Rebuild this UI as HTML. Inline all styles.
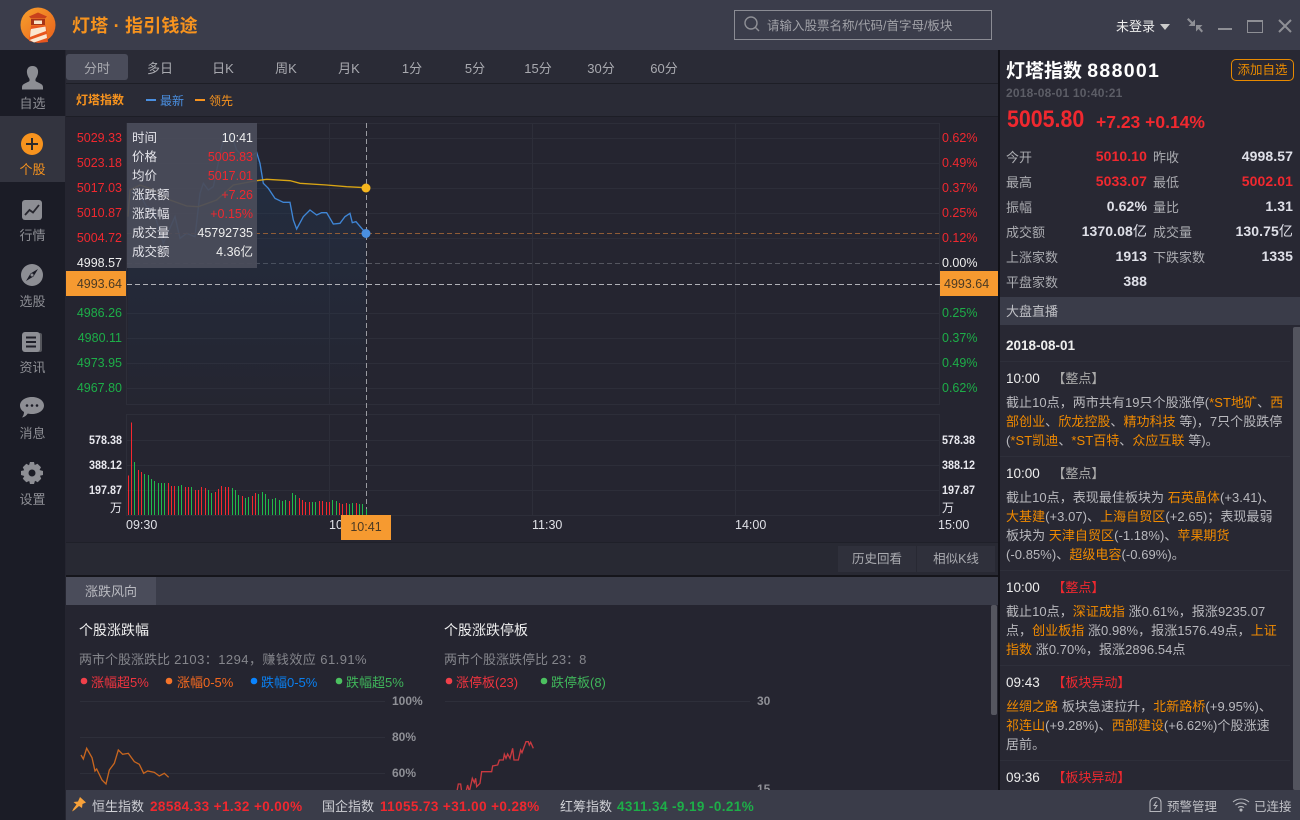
<!DOCTYPE html>
<html lang="zh"><head><meta charset="utf-8"><title>灯塔</title>
<style>
html,body{margin:0;padding:0;background:#252530}
body{width:1300px;height:820px;overflow:hidden;position:relative;font:13px/20px "Liberation Sans","Noto Sans CJK SC",sans-serif;color:#bbb}
.b{position:absolute}
.t{position:absolute;white-space:nowrap;line-height:20px;height:20px;margin-top:1px}
.r{color:#f0282f}.g{color:#1dae48}.w{color:#eee}.o{color:#f7931e}.f{color:#f08a00}
.bd{font-weight:bold}
.tab{position:absolute;top:59px;width:62px;text-align:center;color:#a9aab0;line-height:20px}
.l{position:absolute;width:56px;text-align:right;left:66px;font-size:12.5px;line-height:20px}
.p{position:absolute;left:942px;font-size:12.5px;line-height:20px}
.v{position:absolute;width:56px;text-align:right;left:66px;font-size:12px;font-weight:bold;color:#e8e8ee;line-height:20px;transform:scaleX(.9);transform-origin:100% 50%}
.vr{position:absolute;left:942px;font-size:12px;font-weight:bold;color:#e8e8ee;line-height:20px;transform:scaleX(.9);transform-origin:0 50%}
.s{position:absolute;width:65px;left:0;text-align:center;color:#8d8e94;line-height:20px;margin-top:1px}
.tl{position:absolute;left:132px;color:#e4e4ea;font-size:12.5px;line-height:19px;margin-top:1px}
.tv{position:absolute;left:180px;width:73px;text-align:right;font-size:12.5px;line-height:19px;margin-top:1px}
.sl{position:absolute;color:#aaabb0;line-height:20px;margin-top:1px}
.sv{position:absolute;width:80px;text-align:right;font-size:14px;font-weight:bold;color:#dfe0e8;line-height:20px;letter-spacing:.1px}
.n{position:absolute;left:1006px;white-space:nowrap;color:#b9b9be;line-height:20px;font-size:13px;margin-top:1px;letter-spacing:.05px}
.n b{font-weight:normal;color:#f08a00}
.h{position:absolute;left:1006px;color:#eee;line-height:20px;font-size:13.5px;white-space:nowrap;margin-top:1px}
.h i{font-style:normal;color:#aaa;margin-left:9px;font-size:13px}
.h i.x{color:#f0282f}
.dv{position:absolute;left:1000px;width:290px;height:1px;background:#2e2f3a}
.tm{position:absolute;color:#dfe0e6;font-size:12.5px;line-height:20px}
.sn{letter-spacing:.4px}
</style></head><body>

<!-- Title bar -->
<div class="b" style="left:0;top:0;width:1300px;height:50px;background:#3b3d4b"></div>
<svg class="b" style="left:20px;top:7px" width="37" height="37" viewBox="0 0 37 37">
<defs><linearGradient id="lg" x1="0" y1="0" x2="1" y2="1"><stop offset="0" stop-color="#f8a12c"/><stop offset="1" stop-color="#e8601c"/></linearGradient></defs>
<circle cx="18" cy="18" r="17.5" fill="url(#lg)"/>
<path d="M9 9.500L18 5.500L27 9.500L25 11.500H11Z" fill="#c8401c"/>
<path d="M11 12H25V18H11Z" fill="#a83418"/>
<path d="M14 13.500H22V17H14Z" fill="#f7e3c8"/>
<path d="M11 18.500H26L28 35L18 36L9 34Z" fill="#e8561e"/>
<path d="M11 22L25.500 19.500L26 24L10 30L10.500 24ZM9.500 33L26.500 27L27 31L14 35.500Z" fill="#fbe6cf"/>
</svg>
<div class="t o bd" style="left:72px;top:15px;font-size:18px;letter-spacing:.2px">灯塔 · 指引钱途</div>
<div class="b" style="left:734px;top:10px;width:256px;height:28px;border:1px solid #8b8c94"></div>
<svg class="b" style="left:743px;top:15px" width="18" height="18" viewBox="0 0 18 18" fill="none" stroke="#8f9096" stroke-width="1.400"><circle cx="8" cy="8" r="6"/><path d="M12.500 12.500L16 16"/></svg>
<div class="t" style="left:767px;top:15px;color:#a0a1a7;font-size:12.5px">请输入股票名称/代码/首字母/板块</div>
<div class="t" style="left:1116px;top:16px;color:#eee;font-size:13px">未登录</div>
<svg class="b" style="left:1160px;top:24px" width="10" height="6"><path d="M0 0H10L5 6Z" fill="#ccc"/></svg>
<svg class="b" style="left:1187px;top:18px" width="16" height="15" viewBox="0 0 16 15" fill="#8e8f95"><path d="M0 1.500L1.500 0L5.500 4L8 1.500V8H1.500L4 5.500Z"/><path d="M9 7H15.500L13 9.500L16 13L14.500 14.500L11.500 11L9 13.500Z"/></svg>
<div class="b" style="left:1218px;top:28px;width:14px;height:2px;background:#8e8f95"></div>
<div class="b" style="left:1247px;top:20px;width:14px;height:10px;border:1px solid #8e8f95;border-top-width:2px"></div>
<svg class="b" style="left:1278px;top:19px" width="14" height="14" viewBox="0 0 14 14"><path d="M1 1L13 13M13 1L1 13" stroke="#8e8f95" stroke-width="2"/></svg>

<!-- Sidebar -->
<div class="b" style="left:0;top:50px;width:65px;height:770px;background:#1b1c26"></div>
<div class="b" style="left:0;top:116px;width:65px;height:66px;background:#33343f"></div>
<svg class="b" style="left:21px;top:65px" width="23" height="25" viewBox="0 0 23 25"><path d="M11.500 1C16 1 17.500 4.500 17 8C16.700 10.500 15.500 12.500 14.500 14V16C17 18 22 18.500 22 22V24.500H1V22C1 18.500 6 18 8.500 16V14C7.500 12.500 6.300 10.500 6 8C5.500 4.500 7 1 11.500 1Z" fill="#8d8e94"/></svg>
<div class="s" style="top:93px">自选</div>
<svg class="b" style="left:21px;top:133px" width="22" height="22" viewBox="0 0 22 22"><circle cx="11" cy="11" r="11" fill="#f7931e"/><path d="M11 5V17M5 11H17" stroke="#2b2a2c" stroke-width="2"/></svg>
<div class="s o" style="top:159px;color:#f7931e">个股</div>
<svg class="b" style="left:22px;top:200px" width="20" height="20" viewBox="0 0 20 20"><rect width="20" height="20" rx="3" fill="#8d8e94"/><path d="M3 15L7.500 10L11 12.500L17 5" stroke="#26262e" stroke-width="1.800" fill="none"/></svg>
<div class="s" style="top:225px">行情</div>
<svg class="b" style="left:21px;top:264px" width="22" height="22" viewBox="0 0 22 22"><circle cx="11" cy="11" r="11" fill="#8d8e94"/><path d="M17 5L12.500 12.500L5 17L9.500 9.500Z" fill="#1b1c26"/><circle cx="11" cy="11" r="1.500" fill="#8d8e94"/></svg>
<div class="s" style="top:291px">选股</div>
<svg class="b" style="left:22px;top:332px" width="20" height="21" viewBox="0 0 20 21"><rect x="2" y="1" width="18" height="19" rx="2" fill="#55565c"/><rect width="18" height="20" rx="3" fill="#8d8e94"/><path d="M4 5.500H14M4 10H14M4 14.500H14" stroke="#1f1f28" stroke-width="2"/></svg>
<div class="s" style="top:357px">资讯</div>
<svg class="b" style="left:20px;top:397px" width="24" height="22" viewBox="0 0 24 22"><path d="M12 0C18.600 0 24 3.600 24 8.500S18.600 17 12 17C10.500 17 9 16.800 7.800 16.500C6.500 18.500 4.500 20 2 20.500C3.300 19 4 17 4 15C1.500 13.500 0 11.200 0 8.500C0 3.600 5.400 0 12 0Z" fill="#8d8e94"/><circle cx="7" cy="8.500" r="1.300" fill="#1b1c26"/><circle cx="12" cy="8.500" r="1.300" fill="#1b1c26"/><circle cx="17" cy="8.500" r="1.300" fill="#1b1c26"/></svg>
<div class="s" style="top:423px">消息</div>
<svg class="b" style="left:21px;top:462px" width="22" height="22" viewBox="0 0 22 22"><path d="M9 0H13L13.700 3L16.500 1.800L20 5.300L18.500 8L22 9V13L19 13.800L20.200 16.700L16.700 20.200L14 18.700L13 22H9L8.200 19L5.300 20.200L1.800 16.700L3.300 14L0 13V9L3.200 8.200L1.800 5.300L5.300 1.800L8 3.300Z" fill="#8d8e94"/><circle cx="11" cy="11" r="3.500" fill="#1b1c26"/></svg>
<div class="s" style="top:489px">设置</div>

<!-- Main header rows -->
<div class="b" style="left:66px;top:50px;width:932px;height:66px;background:#2a2b36"></div>
<div class="b" style="left:66px;top:83px;width:932px;height:1px;background:#1d1e26"></div>
<div class="b" style="left:66px;top:116px;width:932px;height:1px;background:#1d1e26"></div>
<div class="b" style="left:66px;top:54px;width:62px;height:26px;background:#4a4c5a;border-radius:3px"></div>
<div class="tab" style="left:66px">分时</div><div class="tab" style="left:129px">多日</div><div class="tab" style="left:192px">日K</div><div class="tab" style="left:255px">周K</div><div class="tab" style="left:318px">月K</div><div class="tab" style="left:381px">1分</div><div class="tab" style="left:444px">5分</div><div class="tab" style="left:507px">15分</div><div class="tab" style="left:570px">30分</div><div class="tab" style="left:633px">60分</div>
<div class="t o bd" style="left:76px;top:89px;font-size:12px">灯塔指数</div>
<div class="b" style="left:146px;top:99px;width:10px;height:2px;background:#4a8fe0"></div>
<div class="t" style="left:160px;top:90px;color:#4a8fe0;font-size:12px">最新</div>
<div class="b" style="left:195px;top:99px;width:10px;height:2px;background:#f7931e"></div>
<div class="t o" style="left:209px;top:90px;font-size:12px">领先</div>

<!-- Main chart -->
<svg class="b" style="left:0;top:0" width="1000" height="580" viewBox="0 0 1000 580" fill="none">
<defs><linearGradient id="fa" x1="0" y1="0" x2="0" y2="1"><stop offset="0" stop-color="#1f3b5c" stop-opacity=".4"/><stop offset="1" stop-color="#1f3b5c" stop-opacity=".02"/></linearGradient></defs>
<g stroke="#2d2e39" stroke-width="1">
<path d="M126.500 123.500H939.500V404.500H126.500Z"/>
<path d="M127 138.500H939M127 163.500H939M127 188.500H939M127 213.500H939M127 238.500H939M127 313.500H939M127 338.500H939M127 363.500H939M127 388.500H939"/>
<path d="M329.500 124V404M532.500 124V404M735.500 124V404"/>
<path d="M126.500 414.500H939.500V515.500H126.500Z"/>
<path d="M127 440.500H939M127 465.500H939M127 490.500H939M329.500 415V515M532.500 415V515M735.500 415V515"/>
</g>
<path d="M127 263.500H939" stroke="#55565f" stroke-dasharray="5 3"/>
<g transform="translate(120 120) scale(.3333)">
<path d="M24 280L30 210L60 225L80 260L100 270L130 370L165 290L180 355L200 340L225 350L240 220L250 190L265 210L280 200L305 80L315 45L335 45L350 90L370 110L390 110L410 97L420 130L430 190L445 205L465 235L490 247L510 247L520 300L530 327L550 290L570 270L590 285L605 278L620 278L640 312L660 310L675 290L690 280L697 308L708 305L738 340V855H24Z" fill="url(#fa)"/>
<path d="M24 280L30 210L60 225L80 260L100 270L130 370L165 290L180 355L200 340L225 350L240 220L250 190L265 210L280 200L305 80L315 45L335 45L350 90L370 110L390 110L410 97L420 130L430 190L445 205L465 235L490 247L510 247L520 300L530 327L550 290L570 270L590 285L605 278L620 278L640 312L660 310L675 290L690 280L697 308L708 305L738 340" stroke="#3f86d6" stroke-width="4"/>
<path d="M24 290L30 210L60 195L100 210L150 240L200 258L235 260L290 240L340 195L410 182L440 178L510 182L540 190L620 195L680 200L738 203" stroke="#d9a514" stroke-width="4"/>
</g>
<path d="M127 233.500H939" stroke="#8f5c36" stroke-dasharray="5 3"/>
<path d="M127 284.500H940" stroke="#b0b1b7" stroke-dasharray="5 3"/>
<path d="M366.500 123V515" stroke="#9a9ba1" stroke-dasharray="5 3"/>
<circle cx="366" cy="188" r="4.500" fill="#f7b71e"/>
<circle cx="366" cy="233.500" r="4.500" fill="#4a8fe0"/>
<g transform="translate(70 410) scale(.3333)" stroke-width="3.200" shape-rendering="crispEdges">
<path stroke="#f5282f" d="M175 315V197M184 315V38M205 315V180M214 315V186M295 315V219M304 315V228M313 315V228M346 315V231M355 315V231M376 315V240M385 315V240M394 315V231M406 315V234M436 315V246M445 315V237M454 315V228M466 315V231M475 315V231M517 315V258M547 315V258M556 315V249M658 315V273M688 315V264M697 315V270M706 315V276M718 315V276M748 315V273M757 315V273M769 315V276M778 315V276M808 315V279M817 315V282M829 315V279M859 315V279"/>
<path stroke="#1fbb4c" d="M193 315V156M223 315V192M235 315V195M244 315V207M253 315V213M265 315V219M274 315V219M283 315V219M325 315V228M334 315V225M364 315V231M415 315V240M424 315V249M487 315V234M496 315V240M505 315V255M526 315V264M535 315V261M565 315V252M577 315V246M586 315V252M595 315V267M607 315V267M616 315V264M628 315V270M637 315V273M646 315V270M667 315V249M676 315V255M727 315V276M736 315V276M787 315V270M799 315V273M838 315V282M847 315V279M868 315V282M877 315V282M889 315V297"/>
</g>
</svg>

<!-- Tooltip -->
<div class="b" style="left:127px;top:123px;width:130px;height:145px;background:rgba(74,76,90,.93)"></div>
<div class="tl" style="top:128px">时间</div><div class="tv w" style="top:128px">10:41</div>
<div class="tl" style="top:147px">价格</div><div class="tv r" style="top:147px">5005.83</div>
<div class="tl" style="top:166px">均价</div><div class="tv r" style="top:166px">5017.01</div>
<div class="tl" style="top:185px">涨跌额</div><div class="tv r" style="top:185px">+7.26</div>
<div class="tl" style="top:204px">涨跌幅</div><div class="tv r" style="top:204px">+0.15%</div>
<div class="tl" style="top:223px">成交量</div><div class="tv w" style="top:223px">45792735</div>
<div class="tl" style="top:242px">成交额</div><div class="tv w" style="top:242px">4.36亿</div>

<!-- Axis labels -->
<div class="l r" style="top:128px">5029.33</div><div class="l r" style="top:153px">5023.18</div><div class="l r" style="top:178px">5017.03</div><div class="l r" style="top:203px">5010.87</div><div class="l r" style="top:228px">5004.72</div><div class="l w" style="top:253px">4998.57</div>
<div class="l g" style="top:303px">4986.26</div><div class="l g" style="top:328px">4980.11</div><div class="l g" style="top:353px">4973.95</div><div class="l g" style="top:378px">4967.80</div>
<div class="p r" style="top:128px">0.62%</div><div class="p r" style="top:153px">0.49%</div><div class="p r" style="top:178px">0.37%</div><div class="p r" style="top:203px">0.25%</div><div class="p r" style="top:228px">0.12%</div><div class="p w" style="top:253px">0.00%</div>
<div class="p g" style="top:303px">0.25%</div><div class="p g" style="top:328px">0.37%</div><div class="p g" style="top:353px">0.49%</div><div class="p g" style="top:378px">0.62%</div>
<div class="b" style="left:66px;top:271px;width:60px;height:25px;background:#f69a30"></div>
<div class="l" style="top:274px;color:#4b3a24">4993.64</div>
<div class="b" style="left:940px;top:271px;width:58px;height:25px;background:#f69a30"></div>
<div class="p" style="top:274px;left:944px;color:#4b3a24">4993.64</div>
<div class="v" style="top:430px">578.38</div><div class="v" style="top:455px">388.12</div><div class="v" style="top:480px">197.87</div><div class="v" style="top:498px;font-weight:normal;transform:none">万</div>
<div class="vr" style="top:430px">578.38</div><div class="vr" style="top:455px">388.12</div><div class="vr" style="top:480px">197.87</div><div class="vr" style="top:498px;font-weight:normal;transform:none">万</div>
<div class="tm" style="left:126px;top:515px">09:30</div><div class="tm" style="left:329px;top:515px">10:30</div><div class="tm" style="left:532px;top:515px">11:30</div><div class="tm" style="left:735px;top:515px">14:00</div><div class="tm" style="left:938px;top:515px">15:00</div>
<div class="b" style="left:341px;top:515px;width:50px;height:25px;background:#f69a30;text-align:center;line-height:25px;color:#4b3a24;font-size:12.5px">10:41</div>

<!-- Buttons row -->
<div class="b" style="left:66px;top:542px;width:932px;height:33px;background:#282933;border-top:1px solid #1f2029;box-sizing:border-box"></div>
<div class="b" style="left:838px;top:546px;width:78px;height:26px;background:#2f303b;text-align:center;line-height:27px;color:#aaabb0;font-size:12.5px">历史回看</div>
<div class="b" style="left:917px;top:546px;width:78px;height:26px;background:#2f303b;text-align:center;line-height:27px;color:#aaabb0;font-size:12.5px">相似K线</div>
<div class="b" style="left:66px;top:575px;width:932px;height:2px;background:#15151b"></div>
<div class="b" style="left:66px;top:577px;width:932px;height:28px;background:#3a3c49"></div>
<div class="b" style="left:66px;top:577px;width:90px;height:28px;background:#4a4c5a;text-align:center;line-height:30px;color:#b9bac0">涨跌风向</div>
<div class="b" style="left:991px;top:605px;width:6px;height:110px;background:#55565f;border-radius:2px"></div>

<!-- Lower charts -->
<div class="t" style="left:79px;top:619px;color:#eee;font-size:14px">个股涨跌幅</div>
<div class="t" style="left:79px;top:649px;color:#85868c">两市个股涨跌比<span style="letter-spacing:.45px"> 2103：1294，赚钱效应 61.91%</span></div>
<svg class="b" style="left:0;top:0" width="1000" height="800" fill="none">
<circle cx="84" cy="681" r="3.300" fill="#f0404a"/><circle cx="169" cy="681" r="3.300" fill="#f5742a"/><circle cx="254" cy="681" r="3.300" fill="#0a84ff"/><circle cx="339" cy="681" r="3.300" fill="#4cc160"/>
<circle cx="449" cy="681" r="3.300" fill="#f0404a"/><circle cx="544" cy="681" r="3.300" fill="#4cc160"/>
<g stroke="#2e2f3a"><path d="M80 701.500H385M80 737.500H385M80 773.500H385M445 701.500H750"/></g>
<g transform="translate(66 610) scale(.3333)"><path d="M45 435L52 447L62 415L78 443L87 483L92 477L108 510L120 522L130 480L145 460L157 420L170 433L187 430L205 455L220 463L233 490L245 483L265 487L280 498L295 490L308 502" stroke="#c8661f" stroke-width="4"/></g>
<g transform="translate(430 610) scale(.3333)"><path d="M78 560L85 522L92 522L95 545L108 545L113 525L118 545L127 505L133 518L137 505L140 530L150 520L155 485L185 485L188 468L203 465L208 450L220 450L223 433L228 445L233 432L240 445L248 415L252 450L265 450L272 420L276 428L288 395L295 395L298 405L302 397L310 415" stroke="#c93a40" stroke-width="4"/></g>
</svg>
<div class="t" style="left:91px;top:672px;color:#f0343f">涨幅超5%</div>
<div class="t" style="left:177px;top:672px;color:#f5691f">涨幅0-5%</div>
<div class="t" style="left:261px;top:672px;color:#0a7fef">跌幅0-5%</div>
<div class="t" style="left:346px;top:672px;color:#3fb55a">跌幅超5%</div>
<div class="t" style="left:392px;top:690px;color:#8f9096;font-size:12px;font-weight:bold">100%</div>
<div class="t" style="left:392px;top:726px;color:#8f9096;font-size:12px;font-weight:bold">80%</div>
<div class="t" style="left:392px;top:762px;color:#8f9096;font-size:12px;font-weight:bold">60%</div>
<div class="t" style="left:444px;top:619px;color:#eee;font-size:14px">个股涨跌停板</div>
<div class="t" style="left:444px;top:649px;color:#85868c">两市个股涨跌停比 23：8</div>
<div class="t" style="left:456px;top:672px;color:#f0343f">涨停板(23)</div>
<div class="t" style="left:551px;top:672px;color:#3fb55a">跌停板(8)</div>
<div class="t" style="left:757px;top:690px;color:#8f9096;font-size:12px;font-weight:bold">30</div>
<div class="t" style="left:757px;top:778px;color:#8f9096;font-size:12px;font-weight:bold">15</div>

<!-- Right panel -->
<div class="b" style="left:998px;top:50px;width:2px;height:740px;background:#111117"></div>
<div class="b" style="left:1000px;top:50px;width:300px;height:740px;background:#282833"></div>
<div class="t bd" style="left:1006px;top:60px;color:#fff;font-size:19px">灯塔指数 <span style="letter-spacing:1.300px;font-size:19.500px">888001</span></div>
<div class="b" style="left:1231px;top:59px;width:61px;height:20px;border:1px solid #e88a00;border-radius:5px;text-align:center;line-height:21px;color:#e88a00;font-size:12.5px">添加自选</div>
<div class="t bd" style="left:1006px;top:82px;color:#5c5d66;font-size:12px;letter-spacing:.2px">2018-08-01 10:40:21</div>
<div class="t r" style="left:1007px;top:109px;font-size:24px;font-weight:bold;transform:scaleX(.89);transform-origin:0 50%">5005.80</div>
<div class="t r bd" style="left:1096px;top:111px;font-size:17.500px">+7.23 +0.14%</div>

<div class="sl" style="left:1006px;top:147px">今开</div><div class="sv r" style="left:1067px;top:146px;color:#f0282f">5010.10</div>
<div class="sl" style="left:1153px;top:147px">昨收</div><div class="sv" style="left:1213px;top:146px">4998.57</div>
<div class="sl" style="left:1006px;top:172px">最高</div><div class="sv" style="left:1067px;top:171px;color:#f0282f">5033.07</div>
<div class="sl" style="left:1153px;top:172px">最低</div><div class="sv" style="left:1213px;top:171px;color:#f0282f">5002.01</div>
<div class="sl" style="left:1006px;top:197px">振幅</div><div class="sv" style="left:1067px;top:196px">0.62%</div>
<div class="sl" style="left:1153px;top:197px">量比</div><div class="sv" style="left:1213px;top:196px">1.31</div>
<div class="sl" style="left:1006px;top:222px">成交额</div><div class="sv" style="left:1067px;top:221px">1370.08<span style="font-weight:normal">亿</span></div>
<div class="sl" style="left:1153px;top:222px">成交量</div><div class="sv" style="left:1213px;top:221px">130.75<span style="font-weight:normal">亿</span></div>
<div class="sl" style="left:1006px;top:247px">上涨家数</div><div class="sv" style="left:1067px;top:246px">1913</div>
<div class="sl" style="left:1153px;top:247px">下跌家数</div><div class="sv" style="left:1213px;top:246px">1335</div>
<div class="sl" style="left:1006px;top:272px">平盘家数</div><div class="sv" style="left:1067px;top:271px">388</div>

<div class="b" style="left:1000px;top:297px;width:300px;height:28px;background:#3a3c49;line-height:30px;color:#c0c1c6;text-indent:6px">大盘直播</div>
<div class="b" style="left:1293px;top:327px;width:7px;height:463px;background:#53545e;border-radius:2px 0 0 2px"></div>
<div class="t bd" style="left:1006px;top:335px;color:#eee;font-size:13.500px">2018-08-01</div>
<div class="dv" style="top:361px"></div>
<div class="h" style="top:368px">10:00<i>&nbsp;【整点】</i></div>
<div class="n" style="top:392px">截止10点，两市共有19只个股涨停(<b>*ST地矿</b>、<b>西</b></div>
<div class="n" style="top:411px"><b>部创业</b>、<b>欣龙控股</b>、<b>精功科技</b> 等)，7只个股跌停</div>
<div class="n" style="top:430px">(<b>*ST凯迪</b>、<b>*ST百特</b>、<b>众应互联</b> 等)。</div>
<div class="dv" style="top:456px"></div>
<div class="h" style="top:463px">10:00<i>&nbsp;【整点】</i></div>
<div class="n" style="top:487px">截止10点，表现最佳板块为 <b>石英晶体</b>(+3.41)、</div>
<div class="n" style="top:506px"><b>大基建</b>(+3.07)、<b>上海自贸区</b>(+2.65)；表现最弱</div>
<div class="n" style="top:525px">板块为 <b>天津自贸区</b>(-1.18%)、<b>苹果期货</b></div>
<div class="n" style="top:544px">(-0.85%)、<b>超级电容</b>(-0.69%)。</div>
<div class="dv" style="top:570px"></div>
<div class="h" style="top:577px">10:00<i class="x">&nbsp;【整点】</i></div>
<div class="n" style="top:601px">截止10点，<b>深证成指</b> 涨0.61%，报涨9235.07</div>
<div class="n" style="top:620px">点，<b>创业板指</b> 涨0.98%，报涨1576.49点，<b>上证</b></div>
<div class="n" style="top:639px"><b>指数</b> 涨0.70%，报涨2896.54点</div>
<div class="dv" style="top:665px"></div>
<div class="h" style="top:672px">09:43<i class="x">&nbsp;【板块异动】</i></div>
<div class="n" style="top:696px"><b>丝绸之路</b> 板块急速拉升，<b>北新路桥</b>(+9.95%)、</div>
<div class="n" style="top:715px"><b>祁连山</b>(+9.28%)、<b>西部建设</b>(+6.62%)个股涨速</div>
<div class="n" style="top:734px">居前。</div>
<div class="dv" style="top:760px"></div>
<div class="h" style="top:767px">09:36<i class="x">&nbsp;【板块异动】</i></div>

<!-- Status bar -->
<div class="b" style="left:66px;top:790px;width:1234px;height:30px;background:#3a3c49"></div>
<svg class="b" style="left:71px;top:797px" width="15" height="15" viewBox="0 0 15 15"><path d="M9 0L15 5.500L11.500 7L11 11L8 9L3.500 13L1 14.500L2.500 11.500L5.500 7.500L2.500 5L7 4.500Z" fill="#f7a13a"/></svg>
<div class="t" style="left:92px;top:796px;color:#d0d1d6">恒生指数</div>
<div class="t r bd sn" style="left:150px;top:796px;font-size:13.500px">28584.33 +1.32 +0.00%</div>
<div class="t" style="left:322px;top:796px;color:#d0d1d6">国企指数</div>
<div class="t r bd sn" style="left:380px;top:796px;font-size:13.500px">11055.73 +31.00 +0.28%</div>
<div class="t" style="left:560px;top:796px;color:#d0d1d6">红筹指数</div>
<div class="t g bd sn" style="left:617px;top:796px;font-size:13.500px">4311.34 -9.19 -0.21%</div>
<svg class="b" style="left:1148px;top:796px" width="16" height="18" viewBox="0 0 16 18" fill="none" stroke="#b5b6bc" stroke-width="1.100"><path d="M2 15.500V6.500C2 3.500 4.500 1.500 7.500 1.500S13 3.500 13 6.500V15.500H2Z"/><path d="M8.500 5.500L6 9.500H9L6.500 13"/></svg>
<div class="t" style="left:1167px;top:796px;color:#c0c1c6;font-size:12.500px">预警管理</div>
<svg class="b" style="left:1232px;top:797px" width="18" height="15" viewBox="0 0 18 15" fill="none" stroke="#b5b6bc" stroke-width="1.100"><path d="M1 5C5.500 1 12.500 1 17 5M3.500 8C6.500 5.200 11.500 5.200 14.500 8M6 10.500C7.700 9.200 10.300 9.200 12 10.500"/><circle cx="9" cy="13" r="1" fill="#b5b6bc"/></svg>
<div class="t" style="left:1254px;top:796px;color:#c0c1c6;font-size:12.500px">已连接</div>
</body></html>
